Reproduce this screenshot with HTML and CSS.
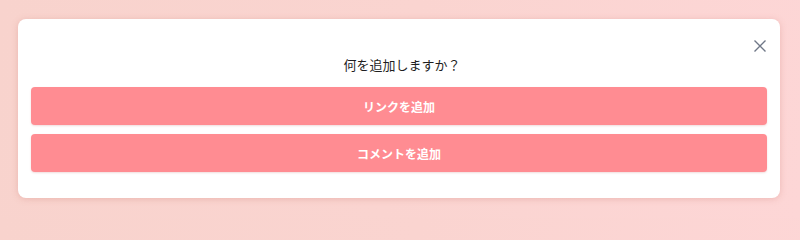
FILE: index.html
```html
<!DOCTYPE html>
<html lang="ja">
<head>
<meta charset="utf-8">
<link rel="stylesheet" href="styles.css">
</head>
<body>
<div class="card">
  <div class="close-row">
    <button class="close" aria-label="閉じる">
      <svg width="12" height="12" viewBox="0 0 12 12"><path d="M0.5 0.5 L11.5 11.5 M11.5 0.5 L0.5 11.5" stroke="#6f7787" stroke-width="1.4" fill="none"/></svg>
    </button>
  </div>
  <div class="title">何を追加しますか？</div>
  <div class="actions">
    <button class="btn">リンクを追加</button>
    <button class="btn">コメントを追加</button>
  </div>
</div>
</body>
</html>
```

FILE: styles.css
```css
html, body {
  margin: 0;
  height: 218px;
  overflow: hidden;
}
body {
  background: linear-gradient(100deg, #f8d3cd 0%, #fad4d0 50%, #fdd6d6 100%);
  padding: 19px 20px 20px 18px;
  box-sizing: border-box;
  font-family: "Noto Sans CJK JP", "Noto Sans", sans-serif;
}
.card {
  background: #ffffff;
  border-radius: 8px;
  box-shadow: 0 1px 6px rgba(210, 130, 120, 0.35);
  padding: 19px 13px 26px 13px;
  height: 179px;
  box-sizing: border-box;
}
.close-row {
  display: flex;
  justify-content: flex-end;
  height: 17px;
}
.close {
  border: 0;
  background: none;
  padding: 0;
  margin: 0;
  width: 14px;
  height: 16px;
  display: flex;
  align-items: center;
  justify-content: center;
  cursor: pointer;
}
.title {
  text-align: center;
  font-size: 13px;
  line-height: 20px;
  color: #1f1f1f;
  padding-left: 6px;
  margin-bottom: 12px;
}
.actions {
  display: flex;
  flex-direction: column;
  gap: 9px;
}
.btn {
  height: 38px;
  border: 0;
  border-radius: 4px;
  background: #ff8c92;
  color: #fff;
  font-family: "Noto Sans CJK JP", "Noto Sans", sans-serif;
  font-weight: bold;
  font-size: 12px;
  box-shadow: 0 1px 2px rgba(200, 120, 120, 0.25);
  cursor: pointer;
}
```
